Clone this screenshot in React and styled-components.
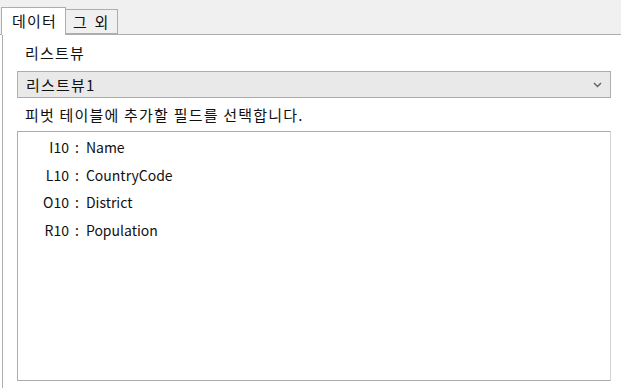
import React from "react";
import styled, { createGlobalStyle } from "styled-components";

const fields = [
  { cell: "I10", name: "Name" },
  { cell: "L10", name: "CountryCode" },
  { cell: "O10", name: "District" },
  { cell: "R10", name: "Population" },
];

function App() {
  return (
    <Wrap>
      <GlobalStyle />
      <TabStrip>
        <Tab active>데이터</Tab>
        <Tab>그 외</Tab>
      </TabStrip>
      <Panel>
        <Label>리스트뷰</Label>
        <Combo>
          <span>리스트뷰1</span>
          <svg width="9" height="6" viewBox="0 0 9 6">
            <polyline
              points="1,1 4.5,4.5 8,1"
              fill="none"
              stroke="#606060"
              strokeWidth="1.4"
            />
          </svg>
        </Combo>
        <Hint>피벗 테이블에 추가할 필드를 선택합니다.</Hint>
        <ListBox>
          {fields.map((f) => (
            <Row key={f.cell}>
              <Cell>{f.cell}</Cell>
              <Colon>:</Colon>
              <span>{f.name}</span>
            </Row>
          ))}
        </ListBox>
      </Panel>
    </Wrap>
  );
}

export default App;

const GlobalStyle = createGlobalStyle`
  body {
    margin: 0;
    background: #ffffff;
  }
`;

const Wrap = styled.div`
  width: 621px;
  height: 388px;
  overflow: hidden;
  display: flex;
  flex-direction: column;
  font-family: "Noto Sans CJK KR", "Noto Sans", sans-serif;
  font-size: 14px;
  color: #111;
  background: #fff;
`;

const TabStrip = styled.div`
  height: 34px;
  flex-shrink: 0;
  background: #f0f0f0;
  border-bottom: 1px solid #adadad;
  display: flex;
  align-items: flex-end;
  padding-left: 1px;
`;

const Tab = styled.div`
  box-sizing: border-box;
  height: ${(p) => (p.active ? "28px" : "25px")};
  margin-bottom: ${(p) => (p.active ? "-1px" : "0")};
  padding: 0 ${(p) => (p.active ? "8px 0 10px" : "7px 0 7px")};
  background: ${(p) => (p.active ? "#fff" : "#f0f0f0")};
  border: 1px solid #adadad;
  border-bottom: ${(p) => (p.active ? "none" : "1px solid #adadad")};
  border-left: ${(p) => (p.active ? "1px solid #adadad" : "none")};
  display: flex;
  align-items: center;
  font-size: 15px;
  letter-spacing: 1.2px;
  word-spacing: 2px;
  line-height: 20px;
  padding-bottom: ${(p) => (p.active ? "2px" : "0")};
`;

const Panel = styled.div`
  flex: 1;
  margin-left: 2px;
  border-left: 1px solid #adadad;
  padding: 8px 10px 7px 14px;
  display: flex;
  flex-direction: column;
`;

const Label = styled.div`
  font-size: 15px;
  letter-spacing: 1.2px;
  line-height: 20px;
  padding-left: 8px;
`;

const Combo = styled.div`
  box-sizing: border-box;
  margin-top: 8px;
  height: 27px;
  border: 1px solid #adadad;
  background: #e9e9e9;
  display: flex;
  align-items: center;
  justify-content: space-between;
  padding: 0 8px 0 8px;
  font-size: 15px;
  letter-spacing: 1.2px;
  line-height: 20px;
`;

const Hint = styled.div`
  margin-top: 7px;
  font-size: 15px;
  letter-spacing: 1.2px;
  line-height: 20px;
  padding-left: 8px;
`;

const ListBox = styled.div`
  box-sizing: border-box;
  margin-top: 6px;
  flex: 1;
  border: 1px solid #adadad;
  border-right-color: #d4d4d4;
  background: #fff;
  padding-top: 1px;
`;

const Row = styled.div`
  height: 27.7px;
  display: flex;
  align-items: center;
  line-height: 20px;
`;

const Cell = styled.span`
  width: 51px;
  text-align: right;
`;

const Colon = styled.span`
  margin: 0 7px 0 6px;
`;
